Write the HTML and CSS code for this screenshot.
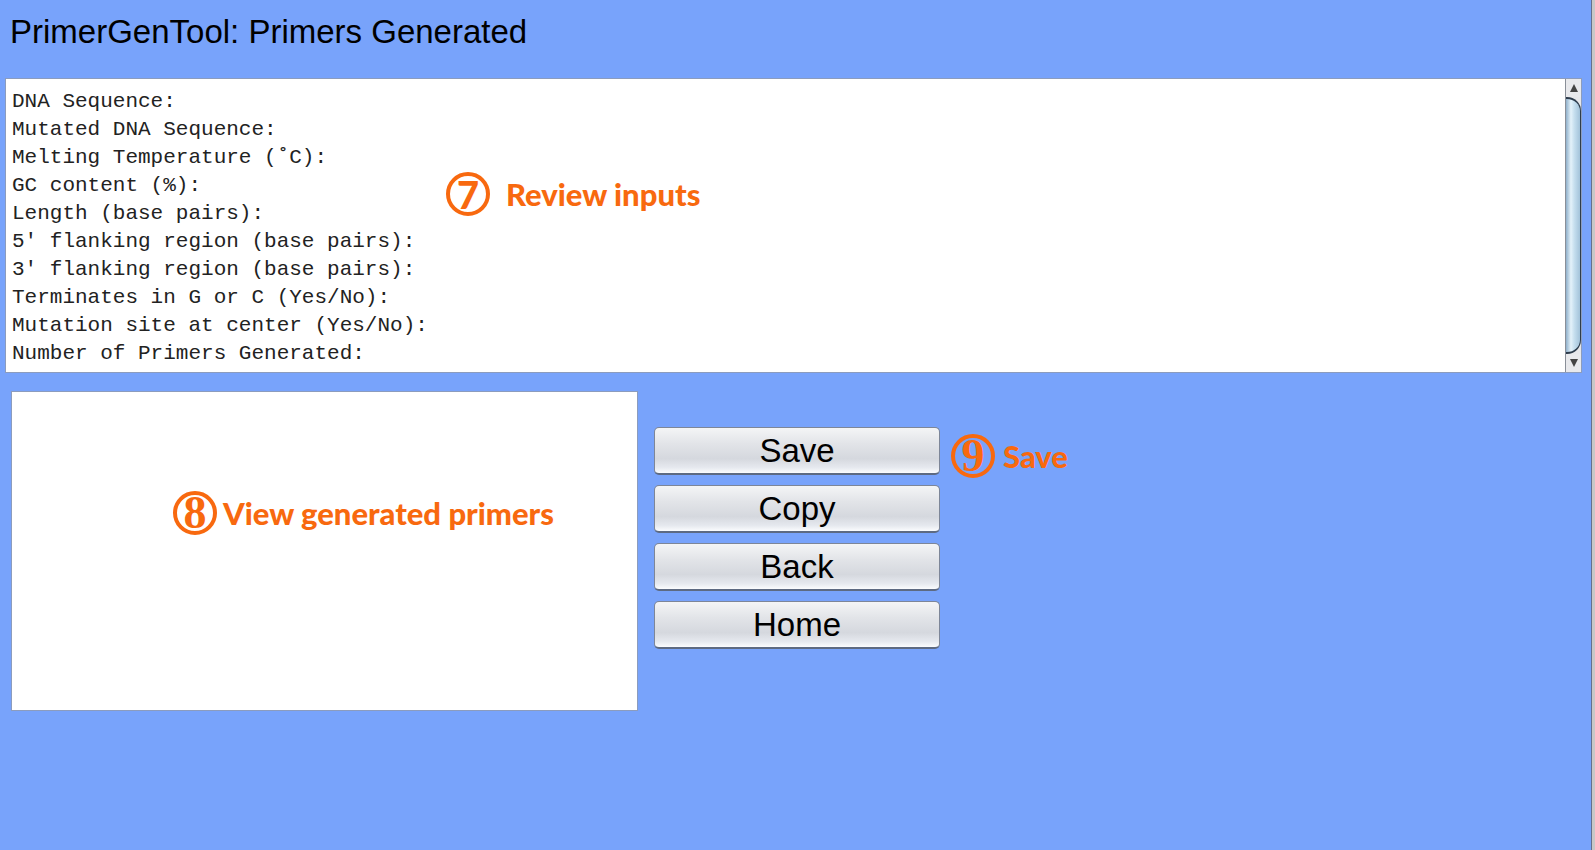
FILE: index.html
```
<!DOCTYPE html>
<html lang="en">
<head>
<meta charset="utf-8">
<title>PrimerGenTool: Primers Generated</title>
<link rel="stylesheet" href="styles.css">
</head>
<body>
<main class="window">
  <h1 class="title">PrimerGenTool: Primers Generated</h1>
  <section class="summary">
    <textarea class="summary-text" rows="10" readonly aria-label="Inputs">DNA Sequence:
Mutated DNA Sequence:
Melting Temperature (˚C):
GC content (%):
Length (base pairs):
5' flanking region (base pairs):
3' flanking region (base pairs):
Terminates in G or C (Yes/No):
Mutation site at center (Yes/No):
Number of Primers Generated:</textarea>
    <div class="scrollbar">
      <button class="arrow" type="button" aria-label="Scroll up"><svg width="8" height="8" viewBox="0 0 8 8"><path d="M4 0 8 8H0Z"/></svg></button>
      <div class="thumb"></div>
      <button class="arrow" type="button" aria-label="Scroll down"><svg width="8" height="8" viewBox="0 0 8 8"><path d="M0 0H8L4 8Z"/></svg></button>
    </div>
    <p class="note note-review"><span class="badge badge-sans">7</span>Review inputs</p>
  </section>
  <section class="results">
    <div class="primers">
      <textarea class="primer-list" readonly aria-label="Generated primers"></textarea>
      <p class="note note-view"><span class="badge">8</span>View generated primers</p>
    </div>
    <div class="actions">
      <button class="action" type="button">Save</button>
      <button class="action" type="button">Copy</button>
      <button class="action" type="button">Back</button>
      <button class="action" type="button">Home</button>
      <p class="note note-save"><span class="badge">9</span>Save</p>
    </div>
  </section>
</main>
</body>
</html>
```
FILE: styles.css
```
* { box-sizing: border-box; }

body {
  margin: 0;
  background: #78a3fb;
  font-family: "Liberation Sans", Arial, sans-serif;
  color: #000;
}

.window {
  min-height: 100vh;
  padding: 13px 10px 0 5px;
  border-right: 3px solid #c8c8c8;
  box-shadow: inset -1px 0 #66718c;
}

.title {
  margin: 0 0 27px;
  padding-left: 5px;
  font-size: 33px;
  line-height: 38px;
  font-weight: 400;
}

.summary {
  position: relative;
  display: flex;
  border: 1px solid #8c9cbd;
  background: #fff;
}

.summary-text {
  flex: 1;
  display: block;
  padding: 9px 6px 4px;
  border: 0;
  outline: 0;
  resize: none;
  overflow: hidden;
  background: #fff;
  color: #222;
  font: 21px/28px "Liberation Mono", "Courier New", monospace;
}

.scrollbar {
  display: flex;
  flex-direction: column;
  width: 16px;
  border-left: 1px solid #8a8f98;
  background: #e6e7ea;
}

.arrow {
  display: flex;
  align-items: center;
  justify-content: center;
  height: 18px;
  padding: 0;
  border: 0;
  background: #e8e9ec;
  fill: #444;
}

.thumb {
  flex: 1;
  border: 2px solid #2d3c4c;
  border-left: 0;
  border-right-width: 1px;
  border-radius: 0 14px 14px 0;
  background: linear-gradient(90deg, #8fb0cb, #e4f2fa 35%, #c5deee 60%, #a3c3da);
}

.results {
  display: flex;
  gap: 16px;
  padding: 18px 0 0 6px;
}

.primers {
  position: relative;
  flex: 0 1 627px;
}

.primer-list {
  display: block;
  width: 100%;
  height: 320px;
  border: 1px solid #8c9cbd;
  outline: 0;
  resize: none;
  background: #fff;
}

.actions {
  position: relative;
  display: flex;
  flex-direction: column;
  gap: 10px;
  width: 286px;
  padding-top: 36px;
}

.action {
  height: 48px;
  padding: 0;
  border: 1px solid #7d8698;
  border-bottom: 2px solid #5d6a82;
  border-radius: 5px;
  background: linear-gradient(#f4f5f6, #e2e4e8 35%, #d5d8de 68%, #e6e9ef 88%, #fbfcfe);
  color: #000;
  font: 33px/38px "Liberation Sans", Arial, sans-serif;
}

.note {
  position: absolute;
  display: flex;
  align-items: center;
  margin: 0;
  color: #f8690f;
  font: 900 31px/44px Lato, sans-serif;
  white-space: nowrap;
}

.badge {
  display: flex;
  align-items: center;
  justify-content: center;
  width: 44px;
  height: 44px;
  border: 4px solid;
  border-radius: 50%;
  font: bold 46px/36px "Liberation Serif", serif;
}

.badge-sans {
  font: 900 38px/36px Lato, sans-serif;
}

.note-review { left: 440px; top: 93px; gap: 16px; }
.note-view { left: 162px; top: 100px; gap: 6px; }
.note-save { left: 297px; top: 43px; gap: 8px; }
```
